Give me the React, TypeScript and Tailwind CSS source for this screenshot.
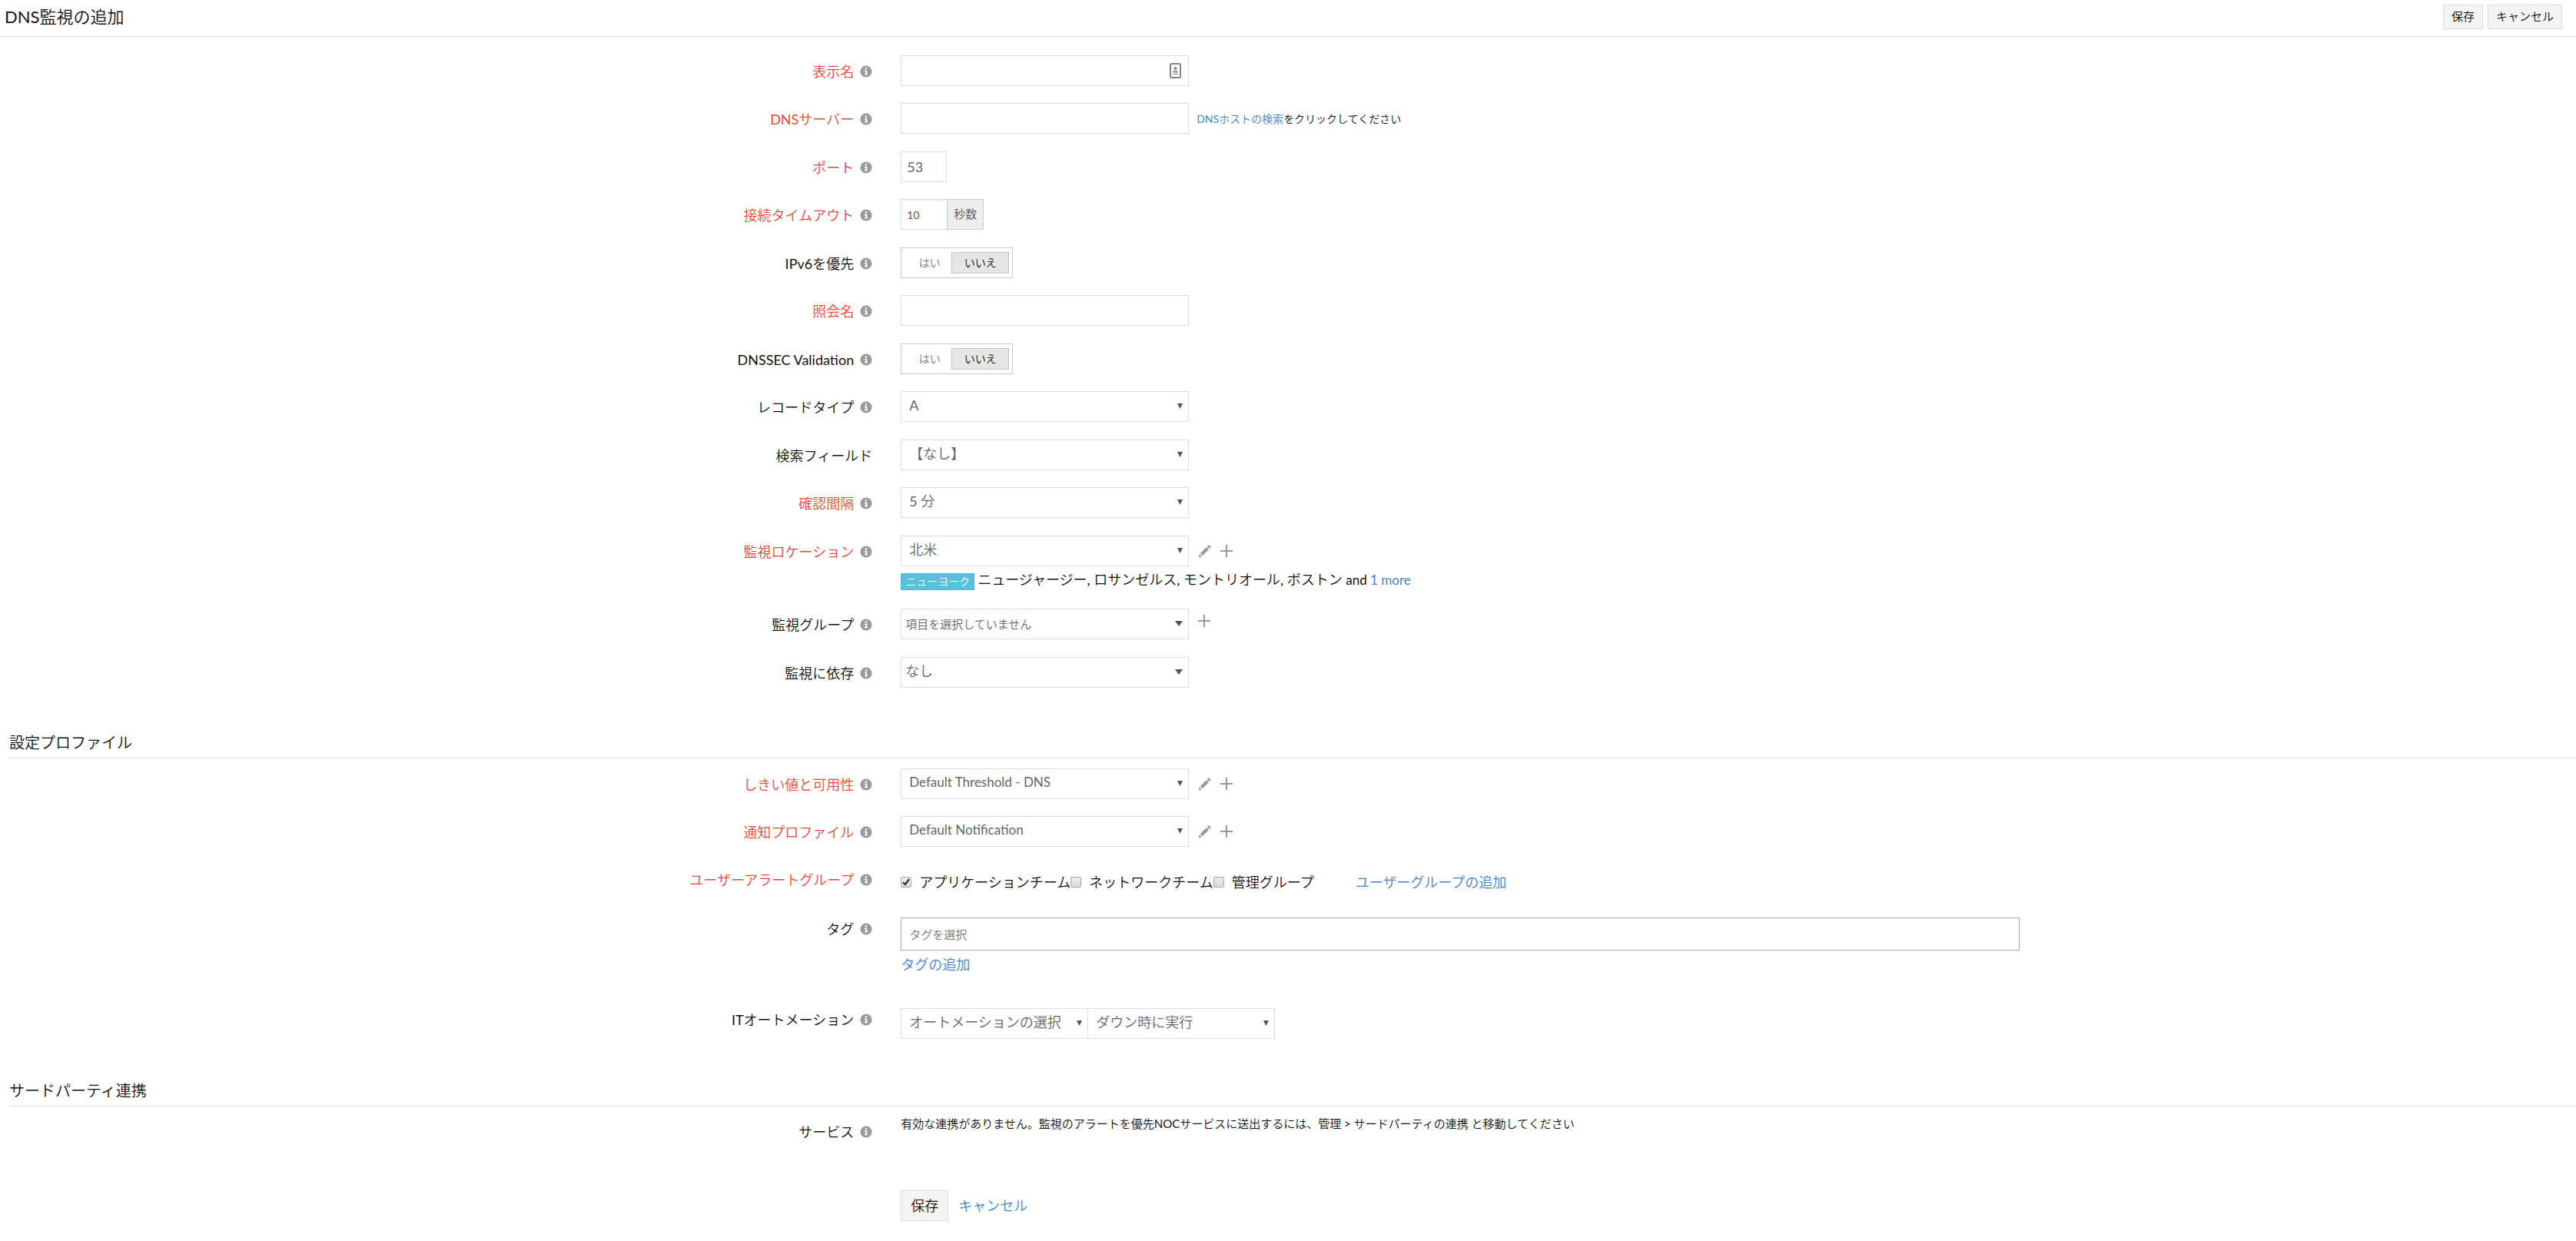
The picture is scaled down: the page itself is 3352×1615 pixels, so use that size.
import type { ReactNode } from 'react';

const control = 'h-10 border border-[#dcdcdc] bg-white text-[18px] text-[#666] outline-none';
const link = 'text-[#3d86c8]';
const requiredLabel = 'text-[#e8483c]';

function InfoIcon() {
  return (
    <svg className="size-4 shrink-0" viewBox="0 0 16 16" aria-hidden="true">
      <circle cx="8" cy="8" r="7.6" fill="#9b9b9b" />
      <path d="M6.9 3.3h2.3v2H6.9zM6 6.500h3.200v4.400h1v1.400H6v-1.400h1V7.900H6z" fill="#fff" />
    </svg>
  );
}

function PencilIcon() {
  return (
    <svg className="size-[17px]" viewBox="0 0 17 17" fill="#999" aria-hidden="true">
      <path d="M0.5 16.5L1.8 12.2L4.8 15.2Z" />
      <path d="M2.7 11.3L11 3L14 6L5.7 14.3Z" />
      <path d="M11.9 2.1L13.4 0.6Q14 0 14.6 0.6L16.4 2.4Q17 3 16.4 3.6L14.9 5.1Z" />
    </svg>
  );
}

function PlusIcon() {
  return (
    <svg className="size-4" viewBox="0 0 16 16" fill="#999" aria-hidden="true">
      <path d="M7 0h2v7h7v2H9v7H7V9H0V7h7z" />
    </svg>
  );
}

function EditAdd({ name, edit = true }: { name: string; edit?: boolean }) {
  return (
    <div className={`ml-3 flex items-center gap-3 ${edit ? 'h-10' : 'h-8'}`}>
      {edit && (
        <button type="button" aria-label={`${name} 編集`}>
          <PencilIcon />
        </button>
      )}
      <button type="button" aria-label={`${name} 追加`}>
        <PlusIcon />
      </button>
    </div>
  );
}

type RowProps = {
  label: string;
  id?: string;
  required?: boolean;
  info?: boolean;
  labelTop?: string;
  className?: string;
  children: ReactNode;
};

function Row({
  label,
  id,
  required,
  info = true,
  labelTop = 'pt-[7px]',
  className = 'mb-[22px] even:mb-[23px]',
  children,
}: RowProps) {
  return (
    <div className={`flex items-start ${className}`}>
      <div className={`flex w-[calc(35%-1px)] shrink-0 items-center justify-end gap-2 pr-[37px] leading-7 ${labelTop}`}>
        {id ? (
          <label htmlFor={id} className={required ? requiredLabel : ''}>
            {label}
          </label>
        ) : (
          <span className={required ? requiredLabel : ''}>{label}</span>
        )}
        {info && <InfoIcon />}
      </div>
      <div className="min-w-0 grow">{children}</div>
    </div>
  );
}

type SelectProps = { id: string; value: string; width?: string; text?: string; big?: boolean; label?: string };

function Select({ id, value, width = 'w-[375px]', text = 'pl-[10px] pb-1 text-[18px]', big, label }: SelectProps) {
  return (
    <div className={`relative ${width}`}>
      <select
        id={id}
        aria-label={label}
        className={`block h-10 w-full appearance-none border border-[#dcdcdc] bg-white pr-6 text-[#666] outline-none ${text}`}
      >
        <option>{value}</option>
      </select>
      <svg
        className={`pointer-events-none absolute top-4 right-2 ${big ? 'h-[7px] w-[10px]' : 'h-[7px] w-[7px]'}`}
        viewBox="0 0 10 10"
        preserveAspectRatio="none"
        fill="#555"
        aria-hidden="true"
      >
        <path d="M0 0h10L5 10z" />
      </svg>
    </div>
  );
}

function Toggle({ label }: { label: string }) {
  return (
    <div role="group" aria-label={label} className="flex h-10 w-[146px] items-center border border-[#c8c8c8] pr-1 text-[14px]">
      <button type="button" className="h-7 grow pl-2 leading-none text-[#777]">
        はい
      </button>
      <button type="button" aria-pressed="true" className="h-7 w-[75px] border border-[#c4c4c4] bg-[#e6e6e6] leading-none text-[#111]">
        いいえ
      </button>
    </div>
  );
}

function Check({ label, checked }: { label: string; checked?: boolean }) {
  return (
    <label className="flex items-center gap-[10px]">
      <span className="relative flex size-[14px]">
        <input
          type="checkbox"
          defaultChecked={checked}
          className="peer size-[14px] appearance-none rounded-[2px] border border-[#a8a8a8] bg-linear-to-b from-[#eee] to-[#d8d8d8]"
        />
        <svg className="pointer-events-none absolute inset-0 hidden size-[14px] peer-checked:block" viewBox="0 0 14 14" aria-hidden="true">
          <path d="M3 7l3 3 5-7" fill="none" stroke="#333" strokeWidth="2.2" />
        </svg>
      </span>
      {label}
    </label>
  );
}

function SectionTitle({ children, className }: { children: ReactNode; className: string }) {
  return <h2 className={`ml-3 border-b border-[#e0e0e0] pb-1 text-[20px] leading-8 ${className}`}>{children}</h2>;
}

export default function App() {
  return (
    <form
      onSubmit={(e) => e.preventDefault()}
      className="min-h-screen bg-white font-['Lato','Noto_Sans_CJK_JP_DemiLight','Noto_Sans_CJK_JP',sans-serif] text-[18px] font-normal text-[#111]"
    >
      <header className="flex h-12 items-center justify-between border-b border-[#e0e0e0] pr-[18px] pb-1 pl-[6px]">
        <h1 className="text-[22px] leading-8">DNS監視の追加</h1>
        <div className="flex gap-[6px] text-[15px]">
          <button type="button" className="h-8 border border-[#dcdcdc] bg-[#f4f4f4] px-[10px] leading-none">
            保存
          </button>
          <button type="button" className="h-8 border border-[#dcdcdc] bg-[#f4f4f4] px-[10px] leading-none">
            キャンセル
          </button>
        </div>
      </header>

      <section className="pt-6">
        <Row label="表示名" id="name" required>
          <div className="relative w-[375px]">
            <input id="name" type="text" className={`${control} block w-full pr-8 pl-2`} />
            <svg className="pointer-events-none absolute top-[10px] right-[10px] h-5 w-[15px]" viewBox="0 0 15 20" aria-hidden="true">
              <rect x="1" y="1" width="13" height="18" rx="1.5" fill="#fff" stroke="#858585" strokeWidth="2" />
              <circle cx="7.5" cy="7" r="2" fill="#888" />
              <path d="M4 12.500c0-4 7-4 7 0zM4 13.800h7v1.200h-7z" fill="#999" />
            </svg>
          </div>
        </Row>
        <Row label="DNSサーバー" id="server" required>
          <div className="flex items-center">
            <input id="server" type="text" className={`${control} w-[375px] px-2`} />
            <p className="ml-[10px] text-[14px]">
              <a href="#lookup" className={link}>
                DNSホストの検索
              </a>
              をクリックしてください
            </p>
          </div>
        </Row>
        <Row label="ポート" id="port" required>
          <input id="port" type="text" defaultValue="53" className={`${control} block w-[60px] pl-[7px]`} />
        </Row>
        <Row label="接続タイムアウト" id="timeout" required>
          <div className="flex">
            <input
              id="timeout"
              type="text"
              defaultValue="10"
              className="h-10 w-[60px] border border-r-0 border-[#dcdcdc] pl-[7px] text-[14px] text-[#555] shadow-[inset_0_1px_1px_rgba(0,0,0,0.075)] outline-none"
            />
            <span className="h-10 border border-[#ccc] bg-[#eee] px-2 text-[15px] leading-9 text-[#555]">秒数</span>
          </div>
        </Row>
        <Row label="IPv6を優先">
          <Toggle label="IPv6を優先" />
        </Row>
        <Row label="照会名" id="query" required>
          <input id="query" type="text" className={`${control} block w-[375px] px-2`} />
        </Row>
        <Row label="DNSSEC Validation">
          <Toggle label="DNSSEC Validation" />
        </Row>
        <Row label="レコードタイプ" id="record">
          <Select id="record" value="A" />
        </Row>
        <Row label="検索フィールド" id="field" info={false}>
          <Select id="field" value="【なし】" />
        </Row>
        <Row label="確認間隔" id="interval" required>
          <Select id="interval" value="5 分" />
        </Row>
        <Row label="監視ロケーション" id="location" required>
          <div className="flex">
            <Select id="location" value="北米" />
            <EditAdd name="監視ロケーション" />
          </div>
          <p className="mt-[9px] mb-[2px] flex items-start gap-1 leading-4">
            <span className="border border-[#46b8da] bg-[#5bc0de] px-[5px] text-[14px] leading-5 text-white">ニューヨーク</span>
            <span>
              ニュージャージー, ロサンゼルス, モントリオール, ボストン{' '}
              <span className="text-[17px]">
                and{' '}
                <a href="#more" className={link}>
                  1 more
                </a>
              </span>
            </span>
          </p>
        </Row>
        <Row label="監視グループ" id="group">
          <div className="flex">
            <Select id="group" value="項目を選択していません" text="pl-[5px] text-[15px]" big />
            <EditAdd name="監視グループ" edit={false} />
          </div>
        </Row>
        <Row label="監視に依存" id="depends">
          <Select id="depends" value="なし" text="pl-[5px] pb-1 text-[18px]" big />
        </Row>
      </section>

      <section>
        <SectionTitle className="mt-[55px] mb-[13px]">設定プロファイル</SectionTitle>
        <Row label="しきい値と可用性" id="threshold" required className="mb-[22px]">
          <div className="flex">
            <Select id="threshold" value="Default Threshold - DNS" text="pl-[10px] pb-1 text-[17px]" />
            <EditAdd name="しきい値と可用性" />
          </div>
        </Row>
        <Row label="通知プロファイル" id="notify" required className="mb-[22px]">
          <div className="flex">
            <Select id="notify" value="Default Notification" text="pl-[10px] pb-1 text-[17px]" />
            <EditAdd name="通知プロファイル" />
          </div>
        </Row>
        <Row label="ユーザーアラートグループ" required className="mb-[22px]">
          <div className="flex h-12 items-center">
            <Check label="アプリケーションチーム" checked />
            <Check label="ネットワークチーム" />
            <Check label="管理グループ" />
            <a href="#add-group" className={`${link} ml-[54px]`}>
              ユーザーグループの追加
            </a>
          </div>
        </Row>
        <Row label="タグ" id="tags" labelTop="pt-px" className="mb-[43px]">
          <input
            id="tags"
            type="text"
            placeholder="タグを選択"
            className="block h-[43px] w-[1456px] max-w-full border border-[#aaa] pl-[10px] text-[15px] outline-none placeholder:text-[#777]"
          />
          <a href="#add-tag" className={`${link} mt-1 block w-fit leading-7`}>
            タグの追加
          </a>
        </Row>
        <Row label="ITオートメーション" id="automation" labelTop="pt-px" className="mb-[22px]">
          <div className="flex">
            <Select id="automation" value="オートメーションの選択" width="w-[244px]" />
            <Select id="automation-when" label="実行タイミング" value="ダウン時に実行" width="-ml-px w-[244px]" />
          </div>
        </Row>
      </section>

      <section>
        <SectionTitle className="mt-[51px] mb-[12px]">サードパーティ連携</SectionTitle>
        <Row label="サービス" className="mb-[62px]">
          <p className="text-[15px] leading-5">
            有効な連携がありません。監視のアラートを優先NOCサービスに送出するには、管理 &gt; サードパーティの連携 と移動してください
          </p>
        </Row>
        <div className="ml-[calc(35%-1px)] flex items-center gap-[13px]">
          <button type="submit" className="h-10 border border-[#dcdcdc] bg-[#f4f4f4] px-3 leading-none">
            保存
          </button>
          <a href="#cancel" className={link}>
            キャンセル
          </a>
        </div>
      </section>
    </form>
  );
}
